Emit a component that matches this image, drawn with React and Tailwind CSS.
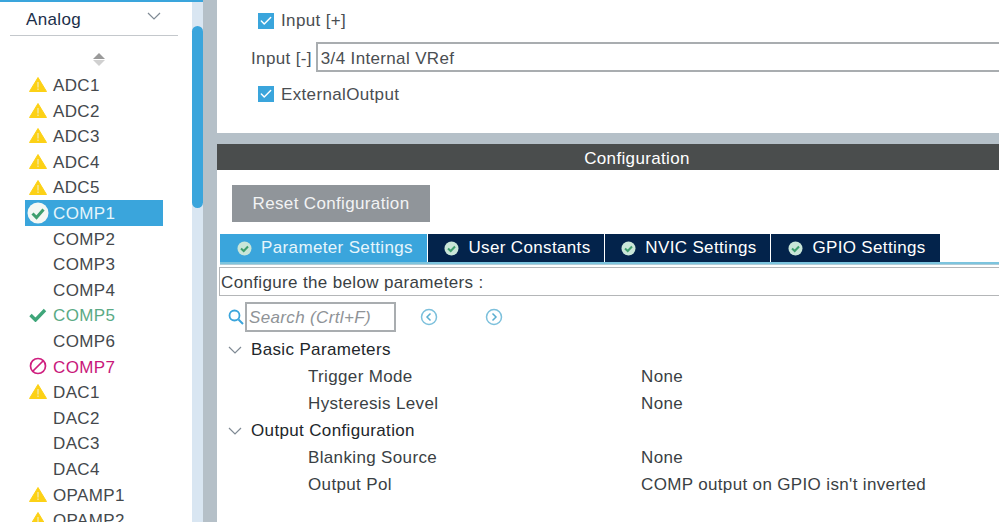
import { Check } from "lucide-react";

const font = { fontFamily: '"Liberation Sans", Arial, sans-serif' };

const items = [
  { name: "ADC1", status: "warn" },
  { name: "ADC2", status: "warn" },
  { name: "ADC3", status: "warn" },
  { name: "ADC4", status: "warn" },
  { name: "ADC5", status: "warn" },
  { name: "COMP1", status: "selected" },
  { name: "COMP2" },
  { name: "COMP3" },
  { name: "COMP4" },
  { name: "COMP5", status: "ok" },
  { name: "COMP6" },
  { name: "COMP7", status: "blocked" },
  { name: "DAC1", status: "warn" },
  { name: "DAC2" },
  { name: "DAC3" },
  { name: "DAC4" },
  { name: "OPAMP1", status: "warn" },
  { name: "OPAMP2", status: "warn" },
];

const tabs = [
  { label: "Parameter Settings", width: "w-[207px]", active: true },
  { label: "User Constants", width: "w-[176px]" },
  { label: "NVIC Settings", width: "w-[165px]" },
  { label: "GPIO Settings", width: "w-[169px]" },
];

const Warn = () => (
  <svg width="18" height="15" viewBox="0 0 18 15" className="shrink-0">
    <path d="M9 0.5 L17.5 14.5 L0.5 14.5 Z" fill="#fcd116" stroke="#fcd116" strokeLinejoin="round" />
    <rect x="8.3" y="5" width="1.4" height="5.5" fill="#f3e9a8" />
    <rect x="8.3" y="11.5" width="1.4" height="1.5" fill="#f3e9a8" />
  </svg>
);

const StatusIcon = ({ status }) => {
  if (status === "warn") return <Warn />;
  if (status === "selected") {
    return (
      <svg width="22" height="22" viewBox="0 0 22 22" className="shrink-0">
        <circle cx="11" cy="11" r="10.5" fill="#f4f8f4" />
        <path d="M5.5 11.5 L9.5 15.5 L16.5 7.5" fill="none" stroke="#3f9f6e" strokeWidth="3" />
      </svg>
    );
  }
  if (status === "ok") {
    return (
      <svg width="18" height="14" viewBox="0 0 18 14" className="shrink-0">
        <path d="M1.5 7 L6.5 12 L16 2" fill="none" stroke="#3fa67a" strokeWidth="3.4" />
      </svg>
    );
  }
  if (status === "blocked") {
    return (
      <svg width="18" height="18" viewBox="0 0 18 18" className="shrink-0">
        <circle cx="9" cy="9" r="7.5" fill="none" stroke="#cf1f7f" strokeWidth="1.7" />
        <path d="M4 14 L14 4" stroke="#cf1f7f" strokeWidth="1.7" />
      </svg>
    );
  }
  return null;
};

const TabCheck = () => (
  <svg width="15" height="15" viewBox="0 0 15 15" className="shrink-0">
    <circle cx="7.5" cy="7.5" r="7" fill="#c9e6d8" />
    <path d="M4 7.5 L6.7 10 L11 5.5" fill="none" stroke="#3f9f6e" strokeWidth="2" />
  </svg>
);

const Checkbox = () => (
  <div className="flex items-center justify-center w-[16px] h-[16px] bg-[#3aa5dc] shrink-0">
    <Check size={14} strokeWidth={2.5} className="text-white" />
  </div>
);

const Chevron = ({ className }) => (
  <svg width="14" height="8" viewBox="0 0 14 8" className={className}>
    <path d="M1 1 L7 7 L13 1" fill="none" stroke="#7f8a94" strokeWidth="1.2" />
  </svg>
);

const Round = ({ flip }) => (
  <svg width="18" height="18" viewBox="0 0 18 18">
    <circle cx="9" cy="9" r="7.5" fill="none" stroke="#7cc0dc" strokeWidth="1.5" />
    <path d={flip ? "M7.5 5.5 L11 9 L7.5 12.5" : "M10.5 5.5 L7 9 L10.5 12.5"} fill="none" stroke="#5aaed0" strokeWidth="1.5" />
  </svg>
);

const Param = ({ name, value }) => (
  <div className="flex items-center h-[27px] pl-[91px] text-[#3a3f44]">
    <span className="w-[333px]">{name}</span>
    <span>{value}</span>
  </div>
);

const Group = ({ label }) => (
  <div className="flex items-center h-[27px] pl-[11px] text-[#22262a]">
    <Chevron className="mr-[9px] w-[14px]" />
    <span>{label}</span>
  </div>
);

export default function App() {
  return (
    <div className="flex w-[999px] h-[522px] overflow-hidden bg-[#b5c0c8] text-[17px] tracking-[0.35px]" style={font}>
      {/* Left list */}
      <aside className="flex flex-col w-[203px] h-full border-t-2 border-[#3aa5dc] bg-white shrink-0">
        <div className="flex flex-1 min-h-0">
          <div className="w-[192px]">
            <div className="flex items-center justify-between h-[34px] ml-[10px] mr-[14px] pl-[16px] pr-[17px] pt-[2px] border-b border-[#c4c8cc] text-[#1c2f4a]">
              <span>Analog</span>
              <Chevron className="mb-[8px]" />
            </div>
            <div className="flex flex-col items-center h-[36px] pt-[17px] pl-[6px]">
              <div className="w-0 h-0 border-x-[6px] border-x-transparent border-b-[6px] border-b-[#9a9a9a]" />
              <div className="mt-[1px] w-0 h-0 border-x-[6px] border-x-transparent border-t-[6px] border-t-[#d0d0d0]" />
            </div>
            <div className="ml-[25px] w-[138px]">
              {items.map((item) => (
                <div
                  key={item.name}
                  className={`flex items-center h-[25.6px] ${
                    item.status === "selected"
                      ? "bg-[#3aa5dc] text-[#e6f5fb]"
                      : item.status === "ok"
                      ? "text-[#5aaa85]"
                      : item.status === "blocked"
                      ? "text-[#c8177a]"
                      : "text-[#44484c]"
                  }`}
                >
                  <div className="flex items-center justify-center w-[28px] pr-[2px] shrink-0">
                    <StatusIcon status={item.status} />
                  </div>
                  <span className="pt-[2px]">{item.name}</span>
                </div>
              ))}
            </div>
          </div>
          <div className="w-[11px] bg-[#d9e6f2] pt-[24px]">
            <div className="w-[11px] h-[182px] rounded-full bg-[#3aa5dc]" />
          </div>
        </div>
      </aside>

      {/* Main */}
      <main className="flex flex-col flex-1 ml-[14px] min-w-0">
        <section className="h-[133px] bg-white pt-[13px] text-[#4a4e52]">
          <div className="flex items-center h-[16px] pl-[41px] gap-[7px]">
            <Checkbox />
            <span>Input [+]</span>
          </div>
          <div className="flex items-center mt-[13px] pl-[34px] gap-[4px]">
            <span className="pt-[3px]">Input [-]</span>
            <div className="flex-1 h-[30px] flex items-center pl-[3px] pt-[3px] border-2 border-r-0 border-[#a9adb0]">3/4 Internal VRef</div>
          </div>
          <div className="flex items-center h-[16px] mt-[14px] pl-[41px] gap-[7px]">
            <Checkbox />
            <span className="pt-[2px]">ExternalOutput</span>
          </div>
        </section>

        <div className="mt-[11px] flex-1 flex flex-col bg-white">
          <div className="flex items-center justify-center h-[26px] pl-[58px] pt-[3px] bg-[#4a4d4d] text-white">Configuration</div>

          <div className="pt-[15px] pl-[15px]">
            <button className="w-[198px] h-[37px] bg-[#90959a] text-[#f2f3f4]">Reset Configuration</button>
          </div>

          <div className="flex mt-[12px] ml-[3px] gap-[1px] h-[28px]">
            {tabs.map((tab) => (
              <div
                key={tab.label}
                className={`flex items-center justify-center gap-[9px] pl-[3px] ${tab.width} ${
                  tab.active ? "bg-[#3aa5dc] text-[#e6f5fb]" : "bg-[#03234b] text-white"
                }`}
              >
                <TabCheck />
                <span>{tab.label}</span>
              </div>
            ))}
          </div>
          <div className="h-[3px] bg-[#7cc4de] ml-[3px] border-b border-[#b0cdd8]" />

          <div className="flex items-center h-[29px] mt-[2px] ml-[2px] pl-[1px] pt-[2px] border border-r-0 border-[#b4b6b8] text-[#3a3f44]">
            Configure the below parameters :
          </div>

          <div className="flex items-center h-[30px] mt-[6px] pl-[10px]">
            <svg width="18" height="18" viewBox="0 0 18 18">
              <circle cx="7.5" cy="7.5" r="5" fill="none" stroke="#3aa5dc" strokeWidth="1.8" />
              <path d="M11.5 11.5 L16 16" stroke="#3aa5dc" strokeWidth="2" />
            </svg>
            <div className="flex items-center w-[151px] h-[30px] pl-[2px] pt-[2px] border-2 border-[#a9adb0] italic text-[#8f9397]">
              Search (Crtl+F)
            </div>
            <div className="ml-[24px] flex gap-[47px]">
              <Round />
              <Round flip />
            </div>
          </div>

          <div className="mt-[4px]">
            <Group label="Basic Parameters" />
            <Param name="Trigger Mode" value="None" />
            <Param name="Hysteresis Level" value="None" />
            <Group label="Output Configuration" />
            <Param name="Blanking Source" value="None" />
            <Param name="Output Pol" value="COMP output on GPIO isn't inverted" />
          </div>
        </div>
      </main>
    </div>
  );
}
